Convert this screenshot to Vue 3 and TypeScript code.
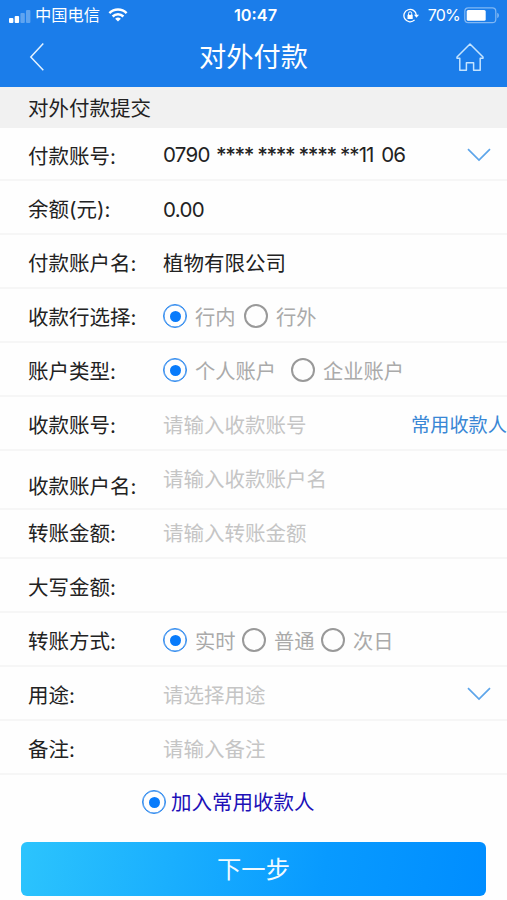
<script setup lang="ts">
import { reactive } from 'vue'

interface Option {
  label: string
  width: number
}

interface Row {
  id: string
  label: string
  height: number
  value?: string
  groups?: string[]
  placeholder?: string
  options?: Option[]
  arrow?: boolean
  link?: string
}

const rows: Row[] = [
  { id: 'account', label: '付款账号', height: 53, groups: ['0790', '****', '****', '****', '**11', '06'], arrow: true },
  { id: 'balance', label: '余额(元)', height: 54, value: '0.00' },
  { id: 'name', label: '付款账户名', height: 54, value: '植物有限公司' },
  { id: 'bank', label: '收款行选择', height: 54, options: [{ label: '行内', width: 81 }, { label: '行外', width: 81 }] },
  { id: 'type', label: '账户类型', height: 54, options: [{ label: '个人账户', width: 128 }, { label: '企业账户', width: 120 }] },
  { id: 'payee', label: '收款账号', height: 54, placeholder: '请输入收款账号', link: '常用收款人' },
  { id: 'payeeName', label: '收款账户名', height: 59, placeholder: '请输入收款账户名' },
  { id: 'amount', label: '转账金额', height: 49, placeholder: '请输入转账金额' },
  { id: 'capital', label: '大写金额', height: 54 },
  { id: 'method', label: '转账方式', height: 54, options: [{ label: '实时', width: 79 }, { label: '普通', width: 79 }, { label: '次日', width: 79 }] },
  { id: 'usage', label: '用途', height: 54, placeholder: '请选择用途', arrow: true },
  { id: 'remark', label: '备注', height: 54, placeholder: '请输入备注' },
]

const selected = reactive<Record<string, string>>({
  bank: '行内',
  type: '个人账户',
  method: '实时',
})
</script>

<template>
  <main class="page">
    <header class="top">
      <div class="status">
        <div class="carrier">
          <svg class="signal" width="22" height="14" viewBox="0 0 22 14" fill="#fff">
            <rect x="0" y="8" width="4.4" height="5" rx="1" />
            <rect x="5.7" y="6" width="4.4" height="7" rx="1" />
            <rect x="11.4" y="3" width="4.4" height="10" rx="1" opacity=".3" />
            <rect x="17" y="0" width="4.4" height="13" rx="1" opacity=".3" />
          </svg>
          <span>中国电信</span>
          <svg class="wifi" width="20" height="14" viewBox="0 0 20 14" fill="none" stroke="#fff" stroke-width="2.5">
            <path d="M1.4 5.1a12.3 12.3 0 0 1 17.2 0" />
            <path d="M4.6 8.5a7.7 7.7 0 0 1 10.8 0" />
            <path d="M10 13.6 7.1 10.8a4.2 4.2 0 0 1 5.8 0z" fill="#fff" stroke="none" />
          </svg>
        </div>
        <time>10:47</time>
        <div class="power">
          <svg width="16" height="15" viewBox="0 0 16 15" fill="none" stroke="#fff" stroke-width="1.3">
            <path d="M11.6 11.9A6.2 6.2 0 1 1 13.3 7" />
            <path d="M11 6.7h5l-2.5 3z" fill="#fff" stroke="none" />
            <rect x="4.5" y="6.8" width="5.2" height="4.2" fill="#fff" stroke="none" />
            <path d="M5.5 7V5.4a1.6 1.6 0 0 1 3.2 0V7" stroke-width="1" />
          </svg>
          <span class="percent">70%</span>
          <svg width="36" height="17" viewBox="0 0 36 17">
            <rect x=".8" y=".9" width="31" height="14.8" rx="3.5" fill="none" stroke="#fff" stroke-opacity=".45" stroke-width="1.2" />
            <rect x="2.7" y="2.9" width="19" height="10.8" rx="1.5" fill="#fff" />
            <path d="M33.3 5.7c2 .8 2 4.5 0 5.3z" fill="#fff" opacity=".5" />
          </svg>
        </div>
      </div>
      <nav class="nav">
        <svg width="16" height="30" viewBox="0 0 16 30" fill="none" stroke="#e4f2ff" stroke-width="1.5">
          <path d="M14.3 1.5 1.8 15l12.5 13.3" />
        </svg>
        <h1>对外付款</h1>
        <svg width="30" height="30" viewBox="0 0 30 30" fill="none" stroke="#c4e3ff" stroke-width="1.5" stroke-linejoin="round">
          <path d="M15 2 2 15v1.2h2.8v12h6.6v-7.5h7.2v7.5h6.6v-12H28V15z" />
        </svg>
      </nav>
    </header>

    <h2 class="section">对外付款提交</h2>

    <form class="form" @submit.prevent>
      <div v-for="row in rows" :key="row.id" class="row" :class="row.id" :style="{ height: row.height + 'px' }">
        <span class="label">{{ row.label }}:</span>
        <span v-if="row.value" class="value">{{ row.value }}</span>
        <span v-if="row.groups" class="number">
          <span v-for="(group, i) in row.groups" :key="i" :class="'group g' + i">{{ group }}</span>
        </span>
        <span v-if="row.placeholder" class="placeholder">{{ row.placeholder }}</span>
        <div v-if="row.options" class="options">
          <label
            v-for="option in row.options"
            :key="option.label"
            class="option"
            :style="{ width: option.width + 'px' }"
            @click="selected[row.id] = option.label"
          >
            <i class="radio" :class="{ on: selected[row.id] === option.label }"></i>
            <span>{{ option.label }}</span>
          </label>
        </div>
        <svg v-if="row.arrow" class="arrow" width="24" height="14" viewBox="0 0 24 14" fill="none" stroke="#5da5ea" stroke-width="1.7">
          <path d="M1 1.2 12 12 23 1.2" />
        </svg>
        <a v-if="row.link" class="link">{{ row.link }}</a>
      </div>

      <div class="favorite">
        <i class="radio on"></i>
        <span>加入常用收款人</span>
      </div>
      <button class="next" type="submit">下一步</button>
    </form>
  </main>
</template>

<style>
body {
  background: #fefefe;
}
</style>

<style scoped>
.page {
  width: 507px;
  height: 900px;
  overflow: hidden;
  background: #fefefe;
  color: #222;
  font-family: Inter, "Noto Sans CJK SC", sans-serif;
  font-size: 20.5px;
  line-height: 30px;
  white-space: nowrap;
}

.top {
  height: 87px;
  background: #1b7dea;
  color: #fff;
}

.status {
  display: grid;
  grid-template-columns: 1fr auto 1fr;
  align-items: center;
  height: 30px;
  padding: 0 7px 0 9px;
  font-size: 16.3px;
}

.carrier,
.power {
  display: flex;
  align-items: center;
}

.carrier span {
  margin: 0 8px 0 4px;
}

.signal {
  margin-top: 3px;
}

.power {
  justify-content: flex-end;
}

.percent {
  margin: 0 4px 0 9px;
  font-size: 16px;
  letter-spacing: -0.8px;
}

time {
  padding-left: 2px;
  font-weight: 600;
}

.nav {
  display: grid;
  grid-template-columns: 30px 1fr 30px;
  align-items: center;
  height: 54px;
  padding: 0 22px 0 29px;
}

h1 {
  margin: 0;
  padding: 2px 7px 0 0;
  font-size: 27.2px;
  font-weight: 400;
  line-height: 40px;
  text-align: center;
}

.section {
  box-sizing: border-box;
  height: 41px;
  margin: 0;
  padding: 1px 0 0 28px;
  background: #f1f1f1;
  font-size: 20.5px;
  font-weight: 400;
  line-height: 41px;
}

.row {
  display: flex;
  align-items: center;
  box-sizing: border-box;
  padding: 2px 0 0 28px;
  border-bottom: 2px solid #f6f6f6;
}

.label,
.value,
.placeholder,
.option span {
  padding-top: 4px;
}

.link {
  padding-top: 2px;
}

.label {
  flex: 0 0 135px;
}

.payeeName .label {
  padding-top: 13px;
}

.payeeName .placeholder,
.amount .label,
.amount .placeholder {
  padding-top: 0;
  padding-bottom: 2px;
}

.number {
  display: flex;
  padding-top: 1px;
}

.placeholder {
  color: #c5c5c5;
}

.options {
  display: flex;
  color: #aaa;
}

.option {
  display: flex;
  align-items: center;
  gap: 8px;
}

.option span {
  font-size: 20.3px;
}

.radio {
  display: flex;
  flex: none;
  align-items: center;
  justify-content: center;
  box-sizing: border-box;
  width: 24px;
  height: 24px;
  border: 2px solid #999;
  border-radius: 50%;
}

.radio.on {
  border: 1px solid #2c88ee;
  box-shadow: inset 0 0 0 0.5px #2c88ee;
}

.radio.on::after {
  width: 11px;
  height: 11px;
  border-radius: 50%;
  background: #087bfb;
  content: "";
}

.arrow {
  margin-right: 16px;
  margin-left: auto;
}

.link {
  margin-left: auto;
  color: #3987d5;
  font-size: 19.2px;
}

.group {
  width: 41.3px;
}

.g0 {
  width: 53px;
  letter-spacing: -0.7px;
}

.g1,
.g2,
.g3 {
  font-weight: 500;
  letter-spacing: -1.4px;
}

.g4 {
  letter-spacing: -0.9px;
}

.g5 {
  letter-spacing: -0.8px;
}

.balance .value {
  padding-top: 3px;
  letter-spacing: -0.7px;
}

.favorite {
  display: flex;
  align-items: center;
  gap: 5px;
  height: 54px;
  padding-left: 142px;
  color: #2010b8;
}

.favorite span {
  padding-top: 1px;
}

.next {
  display: block;
  width: 465px;
  height: 54px;
  margin: 13px 0 0 21px;
  padding: 0;
  border: 0;
  border-radius: 6px;
  background: linear-gradient(100deg, #2cc4fd 0%, #089aff 65%, #008dff 100%);
  color: #f0faff;
  font: 24.3px/54px Inter, "Noto Sans CJK SC", sans-serif;
}
</style>
